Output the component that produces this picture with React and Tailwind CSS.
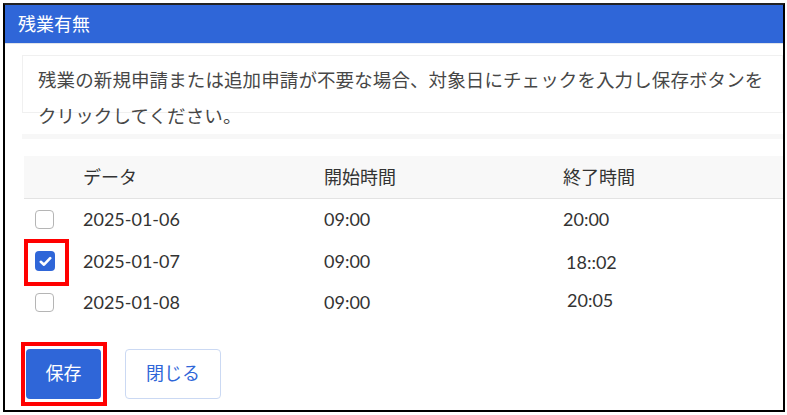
import React, { useState } from "react";

const rows = [
  { date: "2025-01-06", start: "09:00", end: "20:00", endClass: "pl-0 pt-0" },
  { date: "2025-01-07", start: "09:00", end: "18::02", endClass: "pl-[3px] pt-[3px]" },
  { date: "2025-01-08", start: "09:00", end: "20:05", endClass: "pl-[4px] pb-[4px]" },
];

function CheckBox({ checked, onChange }) {
  return (
    <button
      onClick={onChange}
      className={
        checked
          ? "w-[20px] h-[20px] rounded-[4px] bg-[#2f66d8] flex items-center justify-center"
          : "w-[19px] h-[19px] rounded-[4px] border-[1.5px] border-[#b5b5b5] bg-white"
      }
    >
      {checked && (
        <svg width="13" height="11" viewBox="0 0 13 11">
          <path
            d="M1.8 5.8 L5 8.7 L11.2 2.2"
            fill="none"
            stroke="white"
            strokeWidth="2.6"
            strokeLinecap="round"
            strokeLinejoin="round"
          />
        </svg>
      )}
    </button>
  );
}

function App() {
  const [checked, setChecked] = useState([false, true, false]);

  const toggle = (i) => {
    const next = [...checked];
    next[i] = !next[i];
    setChecked(next);
  };

  return (
    <div
      className="w-[787px] h-[415px] bg-white pt-[3px] pl-[3px] overflow-hidden"
      style={{ fontFamily: 'Lato, "Noto Sans CJK JP", sans-serif' }}
    >
      <div className="w-[782px] h-[409px] border-2 border-black border-t-[#222] flex flex-col">
        {/* header */}
        <div className="h-[38px] bg-[#2f66d8] border-b border-[#dfe3ea] flex items-center pl-[13px] box-content">
          <span className="text-white text-[18px] leading-none">残業有無</span>
        </div>

        <div className="pl-[17px] pt-[11px]">
          {/* description */}
          <div className="h-[58px] border border-[#f0f0f0] pl-[15px] pt-[6px] text-[18.5px] leading-[36px] tracking-[0.1px] text-[#474747]">
            <p className="whitespace-nowrap">
              残業の新規申請または追加申請が不要な場合、対象日にチェックを入力し保存ボタンを
            </p>
            <p>クリックしてください。</p>
          </div>
          <div className="h-[5px] mt-[21px] bg-[#f7f7f7]" />

          {/* table */}
          <div className="mt-[17px] ml-[2px] text-[#333]">
            <div className="grid grid-cols-[59px_241px_239px_1fr] h-[43px] items-center bg-[#f8f8f8] border-b border-[#e3e3e3] text-[18px]">
              <div />
              <div>データ</div>
              <div>開始時間</div>
              <div>終了時間</div>
            </div>
            {rows.map((r, i) => (
              <div
                key={r.date}
                className="grid grid-cols-[59px_241px_239px_1fr] h-[41.5px] items-center text-[18px]"
              >
                <div className="relative h-full flex items-center pl-[11px]">
                  <CheckBox checked={checked[i]} onChange={() => toggle(i)} />
                  {i === 1 && (
                    <div className="absolute left-0 top-[-2px] w-[45px] h-[47px] border-4 border-[#ff0000] pointer-events-none" />
                  )}
                </div>
                <div>{r.date}</div>
                <div>{r.start}</div>
                <div className={r.endClass}>{r.end}</div>
              </div>
            ))}
          </div>

          {/* buttons */}
          <div className="flex items-start mt-[18px] ml-[-1px]">
            <div className="border-4 border-[#ff0000] pl-[1px] pr-[2px] py-[3px]">
              <button className="w-[75px] h-[50px] rounded-[4px] bg-[#2f66d8] text-white text-[18px] flex items-center justify-center">
                保存
              </button>
            </div>
            <button className="ml-[18px] mt-[7px] w-[96px] h-[50px] rounded-[4px] border border-[#cbd9f3] bg-white text-[#2f66d8] text-[18px] flex items-center justify-center">
              閉じる
            </button>
          </div>
        </div>
      </div>
    </div>
  );
}

export default App;
